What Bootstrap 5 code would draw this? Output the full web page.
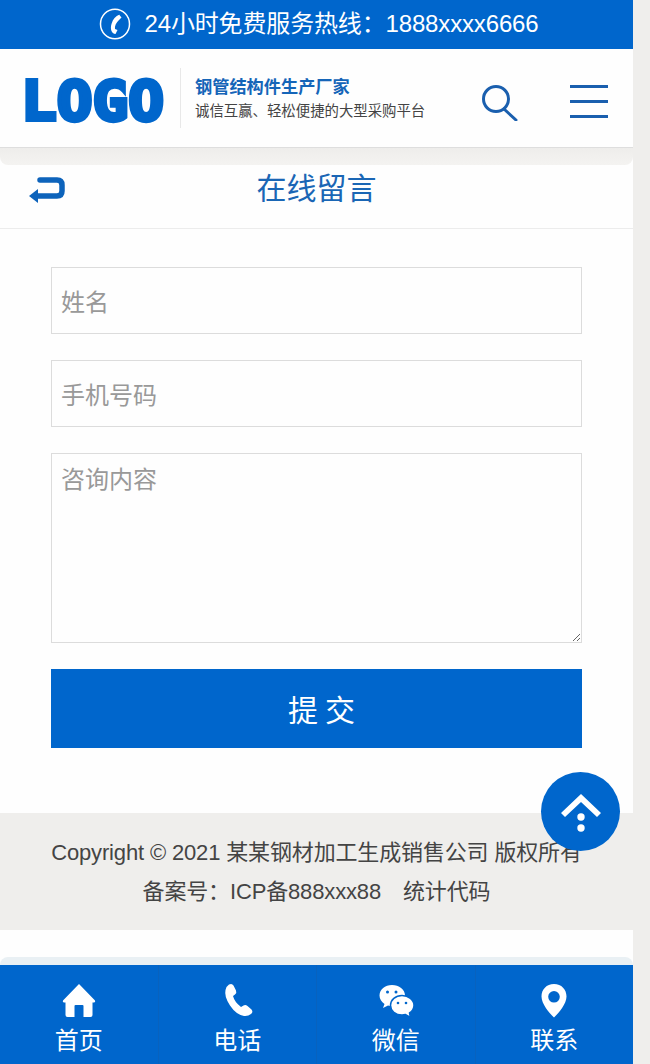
<!DOCTYPE html>
<html lang="zh-CN">
<head>
  <meta charset="UTF-8" />
  <title>在线留言</title>
  <link href="https://cdn.jsdelivr.net/npm/bootstrap@5.3.0/dist/css/bootstrap.min.css" rel="stylesheet">
  <style>
    body {
      background: #efeeec;
      font-family: "Liberation Sans", "Noto Sans CJK SC", sans-serif;
      height: 1064px;
      overflow: hidden;
      color: #444;
    }
    .page-wrap { width: 633px; height: 1064px; background: #fefefe; position: relative; }
    .hotline { height: 49px; background: #0066cc; color: #fff; font-size: 24px; gap: 13px; padding: 0 0 2px 5px; letter-spacing: -.15px; }
    .site-head { height: 99px; border-bottom: 1px solid #dedede; padding-left: 26px; }
    .logo-svg { width: 136px; height: 48px; overflow: visible; }
    .head-split { width: 1px; height: 60px; background: #e8e8e8; margin: 0 14px 0 18px; }
    .brand-box { padding-top: 3px; }
    .brand-name { font-size: 17.2px; line-height: 24px; font-weight: 700; color: #1565b8; }
    .brand-sub { font-size: 14.4px; line-height: 25px; color: #444; }
    .head-search { margin: 9px 0 0 57px; width: 36px; height: 36px; }
    .menu-lines { margin: 6px 0 0 52px; width: 38px; gap: 12px; }
    .menu-lines span { height: 3px; background: #1a5fae; }
    .shade-strip { height: 17px; background: linear-gradient(#eeedeb, #f4f3f1); border-radius: 0 0 8px 8px; }
    .page-title { height: 64px; border-bottom: 1px solid #ececec; padding-bottom: 16px; }
    .page-title h1 { font-size: 30px; font-weight: 400; color: #1a66b5; margin: 0; line-height: 1; }
    .back-arrow { left: 29px; top: 11px; width: 36px; height: 30px; }
    .msg-form { padding: 38px 51px 0; height: 584px; gap: 26px; }
    .msg-form .form-control {
      height: 67px; font-size: 24px; padding: 4px 9px 0; border: 1px solid #dcdcdc; border-radius: 0; background: #fefefe; flex: none;
    }
    .msg-form textarea.form-control { height: 190px; padding-top: 9px; line-height: 34px; }
    .msg-form .form-control::placeholder { color: #999; opacity: 1; }
    .send-btn {
      height: 79px; background: #0066cc; color: #fff; font-size: 30px; letter-spacing: 7px; border: 0; border-radius: 0; padding: 4px 0 0 17px;
    }
    .copy-foot { height: 117px; background: #efeeec; font-size: 22px; line-height: 39px; padding-top: 20px; color: #444; letter-spacing: -.15px; }
    .stat-code { margin-left: 22px; }
    .foot-gap { height: 27px; }
    .tab-shadow { height: 8px; background: #e9f0f4; border-radius: 8px 8px 0 0; }
    .tab-bar { height: 99px; background: #0066cc; color: #fff; }
    .tab-item { flex: 1 1 0; font-size: 24px; line-height: 30px; padding-top: 18px; border-right: 1px solid #0862be; color: #fff; text-decoration: none; }
    .tab-item:last-child { border-right: 0; }
    .tab-item svg { width: 36px; height: 36px; margin-bottom: 7px; }
    .to-top { width: 79px; height: 79px; background: #0066cc; left: 541px; top: 772px; }
  </style>
</head>
<body>
  <div class="page-wrap">
    <div class="hotline d-flex align-items-center justify-content-center">
      <svg width="32" height="32" viewBox="0 0 32 32" fill="none" stroke="#fff">
        <ellipse cx="16" cy="16" rx="14.5" ry="14.8" stroke-width="1.5"/>
        <path d="M20 6.500l2.500 3-2.500 2.500c-3 3-4.500 6-4 9l2.500 1-2 4c-4-.5-5.500-5-4-10s4-8 8-9.500z" fill="#fff" stroke="none"/>
      </svg>
      <span>24小时免费服务热线：1888xxxx6666</span>
    </div>

    <div class="site-head d-flex align-items-center">
      <svg class="logo-svg flex-shrink-0" viewBox="0 0 136 48" role="img" aria-label="LOGO">
        <text x="-5" y="46" font-family="DejaVu Sans Mono, monospace" font-weight="700" font-size="56" textLength="143" lengthAdjust="spacingAndGlyphs" fill="#0066cc" stroke="#0066cc" stroke-width="4" stroke-linejoin="miter">LOGO</text>
      </svg>
      <div class="head-split flex-shrink-0"></div>
      <div class="brand-box flex-shrink-0">
        <div class="brand-name">钢管结构件生产厂家</div>
        <div class="brand-sub">诚信互赢、轻松便捷的大型采购平台</div>
      </div>
      <svg class="head-search flex-shrink-0" viewBox="0 0 36 36" fill="none" stroke="#1a5fae" stroke-width="3">
        <circle cx="14" cy="14" r="12.500"/>
        <path d="M22 24l12 11" stroke-linecap="round"/>
      </svg>
      <div class="menu-lines d-flex flex-column flex-shrink-0">
        <span></span><span></span><span></span>
      </div>
    </div>
    <div class="shade-strip"></div>

    <div class="page-title position-relative d-flex align-items-center justify-content-center">
      <svg class="back-arrow position-absolute" viewBox="0 0 36 30" fill="none" stroke="#0d63bb" stroke-width="5.500">
        <path d="M11 4h17q5 0 5 5v6q0 5-5 5H8" stroke-linecap="round"/>
        <path d="M0 20l9-7v14z" fill="#0d63bb" stroke="none"/>
      </svg>
      <h1>在线留言</h1>
    </div>

    <form class="msg-form d-flex flex-column">
      <input type="text" class="form-control" placeholder="姓名">
      <input type="text" class="form-control" placeholder="手机号码">
      <textarea class="form-control" placeholder="咨询内容"></textarea>
      <button type="button" class="btn send-btn">提交</button>
    </form>

    <div class="copy-foot text-center">
      <div>Copyright © 2021 某某钢材加工生成销售公司 版权所有</div>
      <div>备案号：ICP备888xxx88<span class="stat-code">统计代码</span></div>
    </div>
    <div class="foot-gap"></div>
    <div class="tab-shadow"></div>

    <nav class="tab-bar d-flex text-center">
      <a class="tab-item d-block" href="#">
        <svg class="d-block mx-auto" viewBox="0 0 36 36" fill="#fff">
          <path d="M18 1L34 17.500q.8 2-2 2h-.500V32q0 2-2 2h-7V23q0-1-1-1h-7q-1 0-1 1v11h-7q-2 0-2-2V19.500H4q-2.800 0-2-2z"/>
        </svg>
        首页
      </a>
      <a class="tab-item d-block" href="#">
        <svg class="d-block mx-auto" viewBox="0 0 36 36" fill="#fff">
          <path d="M10 1.500q3-1.500 4.500 1l2.500 5q1 2.500-1 4l-2 1.500q1.500 6 8 11l2.500-1.500q2-1 4 .5l4 3.500q2 2.500-.5 4.500-3 2.500-7 2-8-1.500-14-10.500T6.500 7q.5-3.500 3.500-5.500z"/>
        </svg>
        电话
      </a>
      <a class="tab-item d-block" href="#">
        <svg class="d-block mx-auto" viewBox="0 0 36 36">
          <path d="M14 2C7 2 1.500 6.500 1.500 12.500c0 3.500 2 6.500 5 8.500l-1.500 4 5-2.500c1.500.4 3 .6 4.500.6 7 0 12.500-4.700 12.500-10.600S21 2 14 2z" fill="#fff"/>
          <path d="M24 12.500c-6.500 0-11.500 4.300-11.500 9.800S17.500 32 24 32c1.200 0 2.500-.2 3.500-.5l5 3-1-4.500c2.800-1.800 4.500-4.600 4.500-7.700 0-5.500-5.500-9.800-12-9.800z" fill="#fff" stroke="#0066cc" stroke-width="1.500"/>
          <circle cx="9.500" cy="9" r="1.500" fill="#0066cc"/><circle cx="18" cy="9" r="1.500" fill="#0066cc"/>
          <circle cx="20" cy="20" r="1.300" fill="#0066cc"/><circle cx="28" cy="20" r="1.300" fill="#0066cc"/>
        </svg>
        微信
      </a>
      <a class="tab-item d-block" href="#">
        <svg class="d-block mx-auto" viewBox="0 0 36 36" fill="#fff">
          <path fill-rule="evenodd" d="M18 1C10.500 1 5.500 6.500 5.500 13.500 5.500 21 13 29.500 18 34.500c5-5 12.500-13.500 12.500-21C30.500 6.500 25.500 1 18 1zm0 7a5.800 5.800 0 1 1 0 11.600A5.800 5.800 0 0 1 18 8z"/>
        </svg>
        联系
      </a>
    </nav>

    <a class="to-top position-absolute rounded-circle d-flex align-items-center justify-content-center" href="#">
      <svg width="42" height="42" viewBox="0 0 42 42" fill="#fff">
        <path d="M21 3L41 22l-4 4L21 11 5 26l-4-4z"/>
        <circle cx="21" cy="26" r="3.700"/><circle cx="21" cy="37" r="3.700"/>
      </svg>
    </a>
  </div>

  <script src="https://cdn.jsdelivr.net/npm/bootstrap@5.3.0/dist/js/bootstrap.bundle.min.js"></script>
</body>
</html>
